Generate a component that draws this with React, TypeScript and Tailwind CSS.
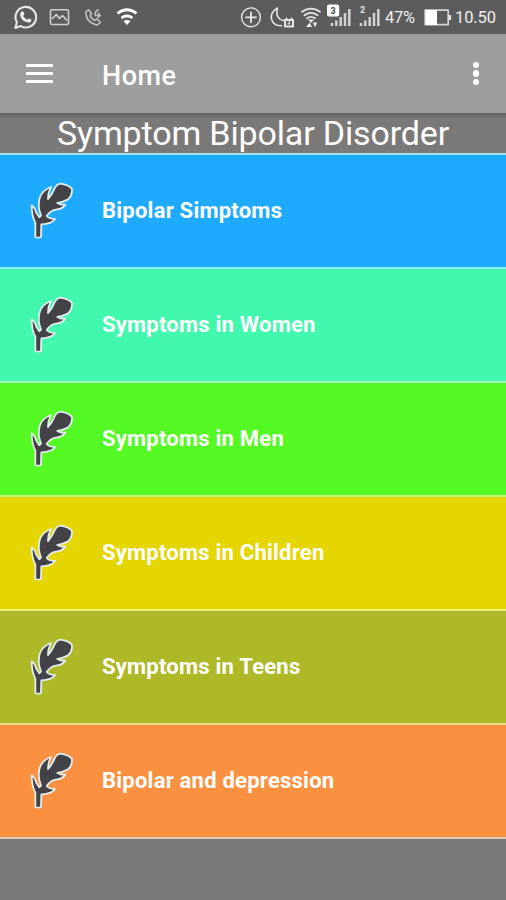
import type { ReactNode } from "react";

const rows = [
  { label: "Bipolar Simptoms", color: "bg-[#1eabff]", line: "border-[#a5e6ee]" },
  { label: "Symptoms in Women", color: "bg-[#41f8ae]", line: "border-[#86eee6]" },
  { label: "Symptoms in Men", color: "bg-[#55f924]", line: "border-[#a2fac0]" },
  { label: "Symptoms in Children", color: "bg-[#e5d500]", line: "border-[#c8f47c]" },
  { label: "Symptoms in Teens", color: "bg-[#afb927]", line: "border-[#f0ef7c]" },
  { label: "Bipolar and depression", color: "bg-[#fb9140]", line: "border-[#eadb8c]" },
];

function Leaf() {
  return (
    <svg viewBox="0 0 210 240" className="mb-[3px] h-[80px] w-[70px]">
      <path
        d="M46 201 L46 158 Q35 138 35 106 Q44 112 49 128 L58 142 L63 136 Q52 110 59 84 Q67 60 93 51 Q84 68 84 87 Q95 76 102 59 Q108 43 121 41 Q146 44 156 57 Q157 78 143 89 Q127 97 112 99 Q122 105 136 104 Q125 119 107 119 Q91 122 80 138 Q88 147 105 147 Q95 162 64 163 L63 201 Q54 205 46 201Z"
        fill="#424247"
        stroke="#e3eced"
        strokeWidth="5.5"
        strokeLinejoin="round"
      />
    </svg>
  );
}

function StatusIcon({ box, size, children }: { box: string; size: string; children: ReactNode }) {
  return (
    <svg viewBox={box} className={`h-[34px] shrink-0 ${size}`} fill="none" stroke="#e6e6e6" strokeWidth="1.6" strokeLinecap="round" strokeLinejoin="round">
      {children}
    </svg>
  );
}

function StatusBar() {
  return (
    <div className="flex h-[34px] shrink-0 items-center bg-[#5c5c5c] text-[#eeeeee]">
      <StatusIcon box="12 0 28 34" size="ml-3 w-[28px]">
        <path d="M15.3 28 L16.9 22.3 A10.3 10.3 0 1 1 20.7 26.1 Z" strokeWidth="2.1" />
        <path d="M21 12 Q22.2 10.3 23.5 12 L24.4 14.3 L23.1 16 Q24.5 18.7 27.3 19.8 L28.8 18.2 L31.6 19.7 Q31.1 22.8 28.2 22.6 Q20.5 21 20.1 14.3Z" fill="#eee" stroke="none" />
      </StatusIcon>
      <StatusIcon box="48 0 24 34" size="ml-2 w-[24px]">
        <rect x="50.5" y="9.7" width="18" height="14.8" rx="1.5" stroke="#d0d0d0" />
        <path d="M52.5 18.5 L56.3 14.5 L59.5 18.5 L62.5 15.5 L66.5 20" stroke="#d0d0d0" />
      </StatusIcon>
      <StatusIcon box="82 0 24 34" size="ml-2.5 w-[24px]">
        <path d="M88.7 9.8 L86 11.3 Q85.3 22.5 97.3 25 L100.5 22.2 L97 19 L94.5 20.4 Q91 18.7 90.2 15.5 L91.5 13.7Z" stroke="#c5c5c5" strokeWidth="1.5" />
        <path d="M98.5 10 Q94.5 11 95.2 15.5 H99.5 M98 13 L100.3 15.5 L98 17.5" stroke="#c5c5c5" strokeWidth="1.5" />
      </StatusIcon>
      <StatusIcon box="114 0 26 34" size="ml-2 w-[26px]">
        <path d="M117.5 13.3 Q127 6.2 136.5 13.3 M121.5 18 Q127 13.8 132.5 18" stroke="#fff" strokeWidth="2.7" strokeLinecap="butt" />
        <path d="M123.5 21.3 Q127 18.8 130.5 21.3 L127 25Z" fill="#fff" stroke="none" />
      </StatusIcon>
      <StatusIcon box="239 0 26 34" size="ml-[99px] w-[26px]">
        <circle cx="251" cy="17.3" r="9.4" strokeWidth="1.4" />
        <path d="M246 17.3 H256 M251 12.3 V22.3" strokeWidth="1.8" />
      </StatusIcon>
      <StatusIcon box="269 0 28 34" size="ml-1 w-[28px]">
        <path d="M277.5 8 C267 14.5 271 26 281.5 25.8 M277.5 8 C275.5 15 278 19.5 283.5 20.5" strokeWidth="1.6" />
        <path d="M285 20 H293 V26.5 H285Z M286.5 20 V18.5 M291.5 20 V18.5" strokeWidth="2" />
        <path d="M289.4 21.7 V23.8 H288" strokeWidth="1.2" />
      </StatusIcon>
      <StatusIcon box="299 0 24 34" size="ml-0.5 w-[24px]">
        <path d="M302 11.7 Q311 5.5 320 11.7 M304.5 15.2 Q311 10.6 317.5 15.2 M307 18.3 Q311 15.5 315 18.3" strokeWidth="1.9" />
        <path d="M308 19.5 H314 L311 23Z M309.7 22.5 L312 27 H306Z M312.7 22.5 H317.3 L315 27Z" fill="#eee" stroke="none" />
      </StatusIcon>
      <StatusIcon box="325 0 28 34" size="ml-0.5 w-[28px]">
        <path d="M332 23 V26 M336.3 20.5 V26 M340.7 17 V26 M345 13 V26 M349.3 9 V26" stroke="#d2d2d2" strokeWidth="2.5" strokeLinecap="butt" />
        <rect x="327" y="4.5" width="12.2" height="12" rx="2" fill="#fff" stroke="none" />
        <text x="333.1" y="13.5" textAnchor="middle" fill="#484848" stroke="none" className="font-['Roboto',sans-serif] text-[9px] font-bold">3</text>
      </StatusIcon>
      <StatusIcon box="357 0 26 34" size="ml-1 w-[26px]">
        <path d="M361 23 V26 M365.3 20.5 V26 M369.7 17 V26 M374 13 V26 M378.3 9 V26" stroke="#d2d2d2" strokeWidth="2.5" strokeLinecap="butt" />
        <text x="362.5" y="12.5" textAnchor="middle" fill="#e6e6e6" stroke="none" className="font-['Roboto',sans-serif] text-[9px] font-bold">2</text>
      </StatusIcon>
      <span className="ml-0.5 mt-0.5 w-[38px] text-[16.5px] tracking-[-0.3px]">47%</span>
      <StatusIcon box="423 0 30 34" size="w-[30px]">
        <rect x="425.2" y="10.2" width="23" height="14.4" stroke="#d5d5d5" strokeWidth="1.7" />
        <rect x="425.5" y="10" width="11.5" height="15" fill="#fff" stroke="none" />
        <path d="M450 15 V20" strokeWidth="2.2" strokeLinecap="butt" />
      </StatusIcon>
      <span className="ml-[2px] mt-0.5 whitespace-nowrap text-[16.5px] tracking-[-0.1px]">10.50</span>
    </div>
  );
}

export default function App() {
  return (
    <main className="flex h-[900px] w-[506px] flex-col overflow-hidden bg-[#7b7878] font-['Roboto',sans-serif] text-white">
      <StatusBar />
      <header className="flex h-[79px] shrink-0 items-center bg-[#9e9e9e] pl-[26px]">
        <button aria-label="Menu" className="flex w-[27px] flex-col gap-[5px]">
          <span className="h-[3px] bg-white" />
          <span className="h-[3px] bg-white" />
          <span className="h-[3px] bg-white" />
        </button>
        <h1 className="ml-[49px] mt-1 text-[27px] font-medium leading-8 tracking-[0.5px]">Home</h1>
        <button aria-label="More options" className="ml-auto mr-[27px] flex flex-col gap-[2px]">
          <span className="size-[6.5px] rounded-full bg-white" />
          <span className="size-[6.5px] rounded-full bg-white" />
          <span className="size-[6.5px] rounded-full bg-white" />
        </button>
      </header>
      <h2 className="h-[40px] shrink-0 bg-linear-to-b from-[#626161] to-[#7b7878] to-15% pt-px text-center text-[34px] leading-[39px] tracking-[-0.15px]">
        Symptom Bipolar Disorder
      </h2>
      <ul>
        {rows.map((row) => (
          <li key={row.label} className={`flex h-[114px] items-center border-t-2 pl-5 ${row.color} ${row.line}`}>
            <Leaf />
            <span className="ml-3 text-[22px] font-bold leading-7 tracking-[0.23px]">{row.label}</span>
          </li>
        ))}
      </ul>
      <div className="h-0.5 shrink-0 bg-[#dfcbb7]" />
    </main>
  );
}
